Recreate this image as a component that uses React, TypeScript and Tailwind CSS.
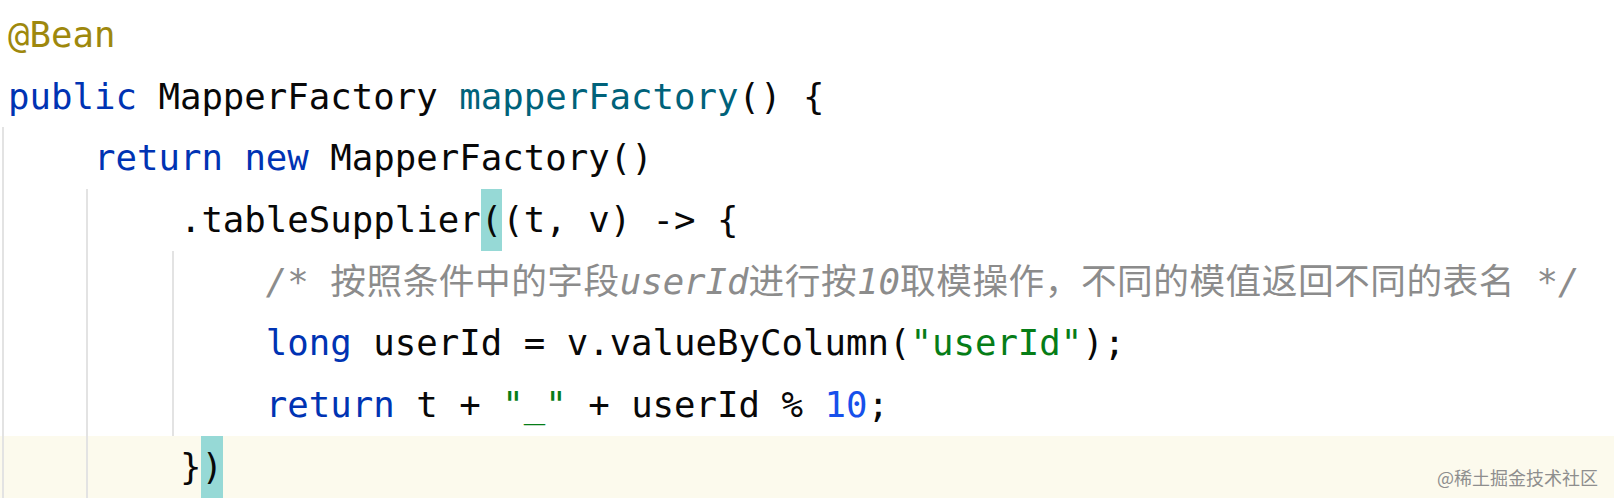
import React from "react";

const KW = ({ children }: { children: React.ReactNode }) => (
  <span className="text-[#0033b3]">{children}</span>
);
const STR = ({ children }: { children: React.ReactNode }) => (
  <span className="text-[#067d17]">{children}</span>
);
const HL = ({ children }: { children: React.ReactNode }) => (
  <span className="inline-block h-[61.7px] bg-[#96d9d6] align-top">{children}</span>
);
const CJK = ({ children }: { children: React.ReactNode }) => (
  <span className="not-italic tracking-[0.48px]">{children}</span>
);

type LineProps = {
  guides?: number[];
  current?: boolean;
  children?: React.ReactNode;
};

const Line = ({ guides = [], current, children }: LineProps) => (
  <div
    className={
      "relative h-[61.7px] whitespace-pre pl-[8px] leading-[61.7px] " +
      (current ? "bg-[#fcfaed]" : "")
    }
  >
    {guides.map((g) => (
      <span
        key={g}
        className={
          "absolute top-0 bottom-0 w-[2px] bg-[#e3e3e3] " +
          (g === 0 ? "left-[2px]" : g === 4 ? "left-[86px]" : "left-[172px]")
        }
      />
    ))}
    <span className="relative">{children}</span>
  </div>
);

export default function App() {
  return (
    <div className="relative h-[502px] w-[1614px] overflow-hidden bg-white pt-[4px] font-['DejaVu_Sans_Mono','Noto_Sans_CJK_SC',monospace] text-[35.7px] text-[#080808]">
      <Line>
        <span className="text-[#9e880d]">@Bean</span>
      </Line>
      <Line>
        <KW>public</KW> MapperFactory <span className="text-[#00627a]">mapperFactory</span>() {"{"}
      </Line>
      <Line guides={[0]}>
        {"    "}
        <KW>return</KW> <KW>new</KW> MapperFactory()
      </Line>
      <Line guides={[0, 4]}>
        {"        "}.tableSupplier<HL>(</HL>(t, v) -&gt; {"{"}
      </Line>
      <Line guides={[0, 4, 8]}>
        {"            "}
        <span className="italic text-[#8c8c8c]">
          /* <CJK>按照条件中的字段</CJK>userId<CJK>进行按</CJK>10<CJK>取模操作，不同的模值返回不同的表名</CJK> */
        </span>
      </Line>
      <Line guides={[0, 4, 8]}>
        {"            "}
        <KW>long</KW> userId = v.valueByColumn(<STR>"userId"</STR>);
      </Line>
      <Line guides={[0, 4, 8]}>
        {"            "}
        <KW>return</KW> t + <STR>"_"</STR> + userId % <span className="text-[#1750eb]">10</span>;
      </Line>
      <Line guides={[0, 4]} current>
        {"        "}
        {"}"}
        <HL>)</HL>
      </Line>
      <div className="absolute right-[16px] top-[464px] font-['Noto_Sans_CJK_SC',sans-serif] text-[18px] leading-[26px] text-[#8e8e8e]">
        @稀土掘金技术社区
      </div>
    </div>
  );
}
